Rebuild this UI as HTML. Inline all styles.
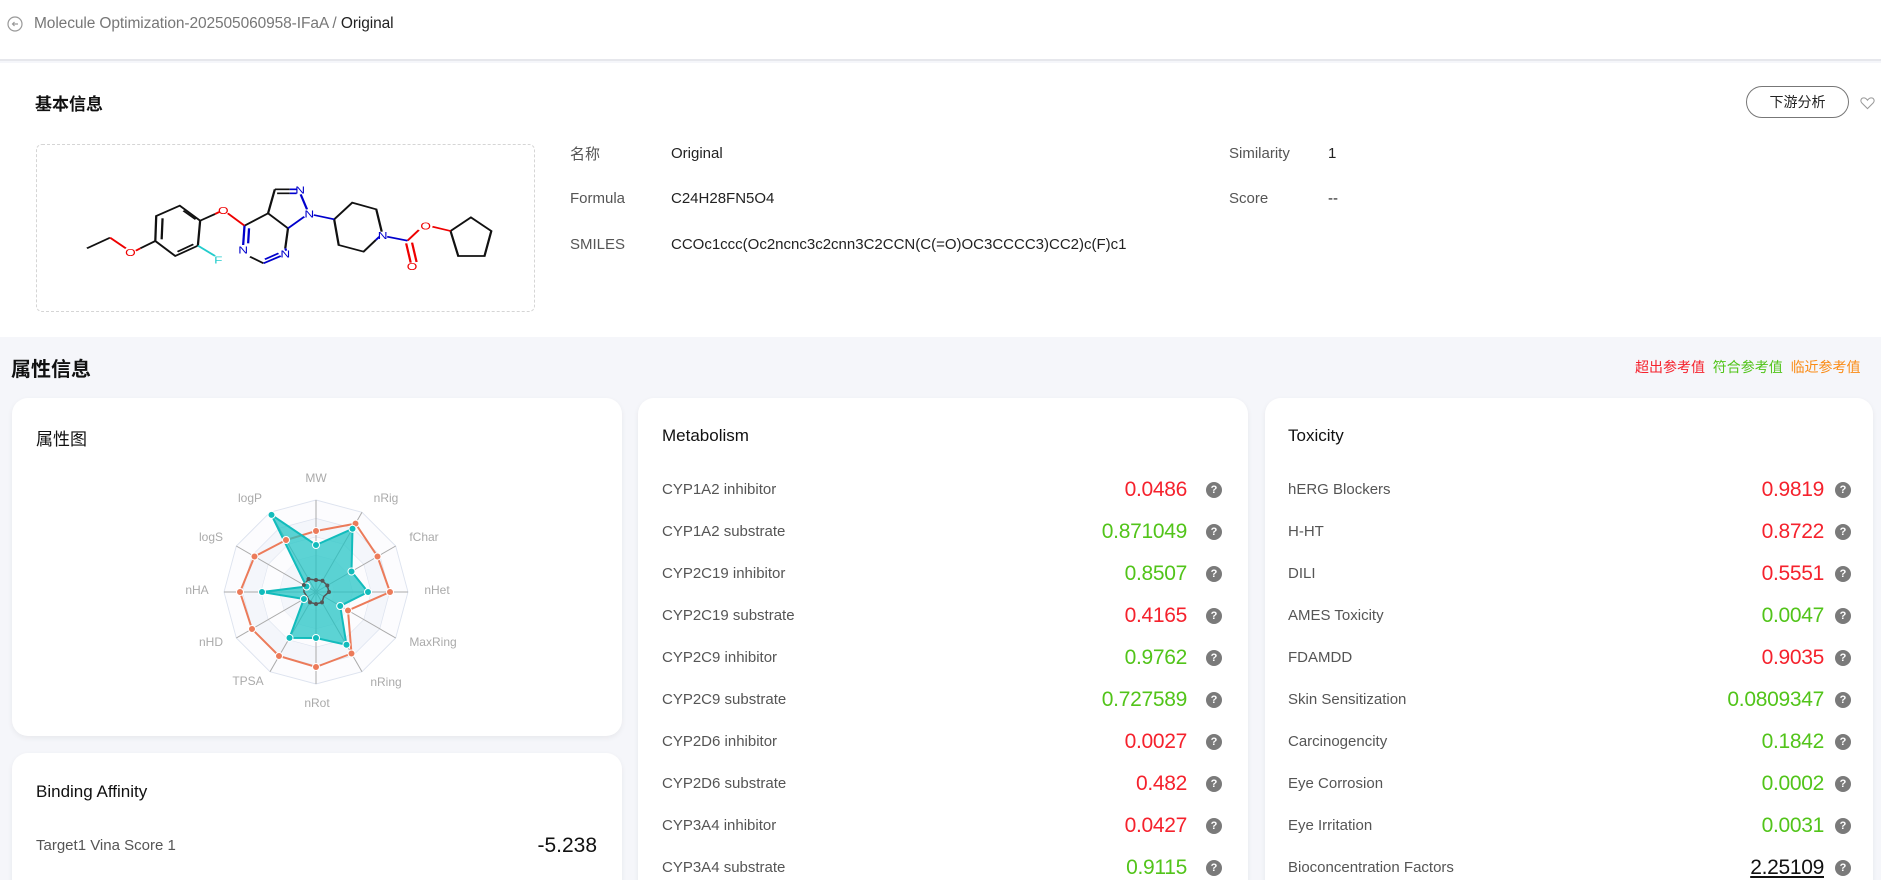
<!DOCTYPE html>
<html><head><meta charset="utf-8">
<style>
*{margin:0;padding:0;box-sizing:border-box}
html{width:1881px;height:880px;overflow:hidden}
body{width:1881px;height:880px;overflow:hidden;background:#f5f6fa;font-family:"Liberation Sans","Noto Sans CJK SC",sans-serif;position:relative;color:#222}
.abs{position:absolute;white-space:nowrap}
.top{position:absolute;left:0;top:0;width:1881px;height:61px;background:#fff;border-bottom:2px solid #e6e7ec}
.basic{position:absolute;left:0;top:63px;width:1881px;height:274px;background:#fff}
.card{position:absolute;background:#fff;border-radius:16px;box-shadow:0 2px 6px rgba(0,0,0,.06)}
.ct{position:absolute;left:36px;top:28px;font-size:17px;color:#111}
.row{position:absolute;left:0;right:0;height:24px}
.lab{position:absolute;left:24px;top:3px;font-size:15px;color:#555}
.val{position:absolute;right:61px;top:0;font-size:21px;line-height:24px;letter-spacing:-0.3px}
.q{position:absolute;right:26px;top:4px;width:16px;height:16px;border-radius:50%;background:#7a7a7a;color:#fff;font-size:11px;font-weight:bold;text-align:center;line-height:16px}
.r{color:#f5222d}.g{color:#52c41a}
.il{font-size:15px;color:#555}
.iv{font-size:15px;color:#222}
</style></head><body>
<div class="top">
 <svg class="abs" style="left:7px;top:16px" width="16" height="16" viewBox="0 0 16 16"><circle cx="8" cy="8" r="7" fill="none" stroke="#999" stroke-width="1.2"/><path d="M11 8H5.5M7.5 6L5.5 8l2 2" fill="none" stroke="#999" stroke-width="1.2"/></svg>
 <div class="abs" style="left:34px;top:15px;font-size:15.5px;color:#777;letter-spacing:-0.1px">Molecule Optimization-202505060958-IFaA / <span style="color:#222">Original</span></div>
</div>
<div class="basic">
 <div class="abs" style="left:35px;top:27px;font-size:17px;font-weight:bold;color:#111">基本信息</div>
 <div class="abs" style="left:1746px;top:23px;width:103px;height:32px;border:1px solid #777;border-radius:16px;font-size:14px;text-align:center;line-height:30px;color:#222">下游分析</div>
 <svg class="abs" style="left:1860px;top:33px" width="15" height="14" viewBox="0 0 16 14"><path d="M8 13L2 7C0 5 1 1.5 4 1.5 6 1.5 7.3 3 8 4 8.7 3 10 1.5 12 1.5 15 1.5 16 5 14 7Z" fill="none" stroke="#999" stroke-width="1.1"/></svg>
 <div class="abs" style="left:36px;top:81px;width:499px;height:168px;border:1px dashed #d5d5d5;border-radius:6px"></div>
 <div class="abs il" style="left:570px;top:80px">名称</div><div class="abs iv" style="left:671px;top:82px">Original</div>
 <div class="abs il" style="left:570px;top:127px">Formula</div><div class="abs iv" style="left:671px;top:127px">C24H28FN5O4</div>
 <div class="abs il" style="left:570px;top:173px">SMILES</div><div class="abs iv" style="left:671px;top:173px">CCOc1ccc(Oc2ncnc3c2cnn3C2CCN(C(=O)OC3CCCC3)CC2)c(F)c1</div>
 <div class="abs il" style="left:1229px;top:82px">Similarity</div><div class="abs iv" style="left:1328px;top:82px">1</div>
 <div class="abs il" style="left:1229px;top:127px">Score</div><div class="abs iv" style="left:1328px;top:127px">--</div>
</div>
<svg class="abs" style="left:0;top:0" width="710" height="340" viewBox="0 0 1568 1020" preserveAspectRatio="none">
 <g fill="none" stroke="#111" stroke-width="5">
  <polyline points="192,745 243,713"/>
  <polygon points="343,723 345,648 397,617 442,662 437,737 387,768"/>
  <line x1="357" y1="718" x2="359" y2="655"/><line x1="405" y1="632" x2="432" y2="658"/><line x1="392" y1="755" x2="427" y2="733"/>
  <polyline points="540,677 592,640 636,685"/>
  <line x1="636" y1="685" x2="630" y2="745"/>
  <line x1="592" y1="640" x2="607" y2="568"/>
  <line x1="607" y1="568" x2="640" y2="568"/>
  <line x1="612" y1="580" x2="640" y2="580"/>
  <line x1="582" y1="790" x2="552" y2="770"/>
  <polyline points="738,658 778,608 831,628 843,695"/>
  <polyline points="738,658 748,735 803,755 830,720"/>
  <polyline points="995,693 1040,652 1085,693 1070,768 1012,768 995,693"/>
  <line x1="343" y1="723" x2="310" y2="745"/>
  <line x1="442" y1="662" x2="475" y2="642"/>
 </g>
 <g fill="none" stroke="#e00" stroke-width="5">
  <line x1="243" y1="713" x2="278" y2="745"/><line x1="300" y1="752" x2="310" y2="745"/>
  <line x1="475" y1="642" x2="484" y2="636"/><line x1="503" y1="640" x2="540" y2="677"/>
  <line x1="900" y1="722" x2="925" y2="690"/><line x1="955" y1="680" x2="995" y2="693"/>
  <line x1="897" y1="730" x2="907" y2="788"/><line x1="910" y1="728" x2="920" y2="786"/>
 </g>
 <g fill="none" stroke="#00c" stroke-width="5">
  <line x1="540" y1="677" x2="537" y2="735"/><line x1="550" y1="685" x2="548" y2="730"/>
  <line x1="582" y1="790" x2="620" y2="768"/><line x1="585" y1="778" x2="615" y2="760"/>
  <line x1="630" y1="745" x2="632" y2="752"/>
  <line x1="640" y1="568" x2="655" y2="568"/><line x1="640" y1="580" x2="655" y2="580"/>
  <line x1="664" y1="583" x2="678" y2="628"/>
  <line x1="636" y1="685" x2="672" y2="650"/><line x1="693" y1="645" x2="738" y2="658"/>
  <line x1="830" y1="720" x2="838" y2="710"/><line x1="855" y1="710" x2="900" y2="722"/>
 </g>
 <line x1="437" y1="737" x2="475" y2="768" stroke="#2cc" stroke-width="5"/>
 <g font-family="Liberation Sans" font-size="30" text-anchor="middle">
  <text x="288" y="768" fill="#e00">O</text><text x="493" y="642" fill="#e00">O</text>
  <text x="482" y="790" fill="#2cc">F</text>
  <text x="537" y="760" fill="#00c">N</text><text x="630" y="772" fill="#00c">N</text>
  <text x="663" y="580" fill="#00c">N</text><text x="683" y="652" fill="#00c">N</text>
  <text x="845" y="717" fill="#00c">N</text>
  <text x="940" y="688" fill="#e00">O</text><text x="910" y="810" fill="#e00">O</text>
 </g>
</svg>

<div class="abs" style="left:11px;top:353px;font-size:20px;font-weight:bold;color:#111">属性信息</div>
<div class="abs" style="left:1635px;top:357px;font-size:14px"><span style="color:#f5222d">超出参考值</span>&nbsp;&nbsp;<span style="color:#52c41a">符合参考值</span>&nbsp;&nbsp;<span style="color:#fa8c16">临近参考值</span></div>

<div class="card" style="left:12px;top:398px;width:610px;height:338px">
 <div class="ct" style="left:24px;top:27px">属性图</div>
</div>
<svg class="abs" style="left:0;top:0" width="700" height="880">
 <g transform="translate(316,592)">
  <g stroke="#dde3ef" stroke-width="1" vector-effect="non-scaling-stroke">
  <polygon transform="scale(0.92)" fill="#fcfcfe" points="0,-100 50,-86.6 86.6,-50 100,0 86.6,50 50,86.6 0,100 -50,86.6 -86.6,50 -100,0 -86.6,-50 -50,-86.6"/>
  <polygon transform="scale(0.736)" fill="#f4f6fb" points="0,-100 50,-86.6 86.6,-50 100,0 86.6,50 50,86.6 0,100 -50,86.6 -86.6,50 -100,0 -86.6,-50 -50,-86.6"/>
  <polygon transform="scale(0.552)" fill="#fcfcfe" points="0,-100 50,-86.6 86.6,-50 100,0 86.6,50 50,86.6 0,100 -50,86.6 -86.6,50 -100,0 -86.6,-50 -50,-86.6"/>
  <polygon transform="scale(0.368)" fill="#f4f6fb" points="0,-100 50,-86.6 86.6,-50 100,0 86.6,50 50,86.6 0,100 -50,86.6 -86.6,50 -100,0 -86.6,-50 -50,-86.6"/>
  <polygon transform="scale(0.184)" fill="#fcfcfe" points="0,-100 50,-86.6 86.6,-50 100,0 86.6,50 50,86.6 0,100 -50,86.6 -86.6,50 -100,0 -86.6,-50 -50,-86.6"/>
  </g>
  <g stroke="#aaa" stroke-width="1">
   <line x1="0" y1="0" x2="0" y2="-92"/><line x1="0" y1="0" x2="46" y2="-79.7"/><line x1="0" y1="0" x2="79.7" y2="-46"/><line x1="0" y1="0" x2="92" y2="0"/><line x1="0" y1="0" x2="79.7" y2="46"/><line x1="0" y1="0" x2="46" y2="79.7"/><line x1="0" y1="0" x2="0" y2="92"/><line x1="0" y1="0" x2="-46" y2="79.7"/><line x1="0" y1="0" x2="-79.7" y2="46"/><line x1="0" y1="0" x2="-92" y2="0"/><line x1="0" y1="0" x2="-79.7" y2="-46"/><line x1="0" y1="0" x2="-46" y2="-79.7"/>
  </g>
  <polygon fill="none" stroke="#ec7b5a" stroke-width="2" points="0,-61 39.5,-68.4 61.5,-35.5 74,0 32,18.5 35.5,61.5 0,75 -37,64 -64,37 -76,0 -61.5,-35.5 -30,-52"/>
  <polygon fill="rgba(30,196,196,0.72)" stroke="#12bcbc" stroke-width="2" points="0,-47 36.5,-63.2 35.5,-20.5 52,0 24.2,14 30.5,52.8 0,46 -26.5,45.9 -12.1,7 -54,0 -9.5,-5.5 -44.5,-77.1"/>
  <polygon fill="none" stroke="#555" stroke-width="1.5" points="0,-12 6.5,-11.3 11.3,-6.5 13,0 7.8,4.5 6,10.4 0,12 -6,10.4 -8.7,5 -12,0 -12.1,-7 -7.5,-13"/>
  <g fill="#ec7b5a" stroke="#fff" stroke-width="1"><circle cx="0" cy="-61" r="3.5"/><circle cx="39.5" cy="-68.4" r="3.5"/><circle cx="61.5" cy="-35.5" r="3.5"/><circle cx="74" cy="0" r="3.5"/><circle cx="32" cy="18.5" r="3.5"/><circle cx="35.5" cy="61.5" r="3.5"/><circle cx="0" cy="75" r="3.5"/><circle cx="-37" cy="64" r="3.5"/><circle cx="-64" cy="37" r="3.5"/><circle cx="-76" cy="0" r="3.5"/><circle cx="-61.5" cy="-35.5" r="3.5"/><circle cx="-30" cy="-52" r="3.5"/></g>
  <g fill="#12bcbc" stroke="#fff" stroke-width="1"><circle cx="0" cy="-47" r="3.5"/><circle cx="36.5" cy="-63.2" r="3.5"/><circle cx="35.5" cy="-20.5" r="3.5"/><circle cx="52" cy="0" r="3.5"/><circle cx="24.2" cy="14" r="3.5"/><circle cx="30.5" cy="52.8" r="3.5"/><circle cx="0" cy="46" r="3.5"/><circle cx="-26.5" cy="45.9" r="3.5"/><circle cx="-12.1" cy="7" r="3.5"/><circle cx="-54" cy="0" r="3.5"/><circle cx="-9.5" cy="-5.5" r="3.5"/><circle cx="-44.5" cy="-77.1" r="3.5"/></g>
  <g fill="#555"><circle cx="0" cy="-12" r="2"/><circle cx="6.5" cy="-11.3" r="2"/><circle cx="11.3" cy="-6.5" r="2"/><circle cx="13" cy="0" r="2"/><circle cx="6" cy="10.4" r="2"/><circle cx="0" cy="12" r="2"/><circle cx="-6" cy="10.4" r="2"/><circle cx="-12.1" cy="-7" r="2"/><circle cx="-7.5" cy="-13" r="2"/></g>
  <g font-family="Liberation Sans" font-size="12" fill="#aaa" text-anchor="middle" dominant-baseline="central">
   <text x="0" y="-114">MW</text><text x="70" y="-94">nRig</text><text x="108" y="-55">fChar</text><text x="121" y="-2">nHet</text><text x="117" y="50">MaxRing</text><text x="70" y="90">nRing</text><text x="1" y="111">nRot</text><text x="-68" y="89">TPSA</text><text x="-105" y="50">nHD</text><text x="-119" y="-2">nHA</text><text x="-105" y="-55">logS</text><text x="-66" y="-94">logP</text>
  </g>
 </g>
</svg>

<div class="card" style="left:12px;top:753px;width:610px;height:150px">
 <div class="ct" style="left:24px;top:29px">Binding Affinity</div>
 <div class="abs" style="left:24px;top:84px;font-size:15px;color:#555">Target1 Vina Score 1</div>
 <div class="abs" style="right:25px;top:81px;font-size:21px;color:#111">-5.238</div>
</div>

<div class="card" style="left:638px;top:398px;width:610px;height:500px">
 <div class="ct" style="left:24px;top:28px">Metabolism</div>
 <div class="row" style="top:80px"><div class="lab">CYP1A2 inhibitor</div><div class="val r">0.0486</div><div class="q">?</div></div>
 <div class="row" style="top:122px"><div class="lab">CYP1A2 substrate</div><div class="val g">0.871049</div><div class="q">?</div></div>
 <div class="row" style="top:164px"><div class="lab">CYP2C19 inhibitor</div><div class="val g">0.8507</div><div class="q">?</div></div>
 <div class="row" style="top:206px"><div class="lab">CYP2C19 substrate</div><div class="val r">0.4165</div><div class="q">?</div></div>
 <div class="row" style="top:248px"><div class="lab">CYP2C9 inhibitor</div><div class="val g">0.9762</div><div class="q">?</div></div>
 <div class="row" style="top:290px"><div class="lab">CYP2C9 substrate</div><div class="val g">0.727589</div><div class="q">?</div></div>
 <div class="row" style="top:332px"><div class="lab">CYP2D6 inhibitor</div><div class="val r">0.0027</div><div class="q">?</div></div>
 <div class="row" style="top:374px"><div class="lab">CYP2D6 substrate</div><div class="val r">0.482</div><div class="q">?</div></div>
 <div class="row" style="top:416px"><div class="lab">CYP3A4 inhibitor</div><div class="val r">0.0427</div><div class="q">?</div></div>
 <div class="row" style="top:458px"><div class="lab">CYP3A4 substrate</div><div class="val g">0.9115</div><div class="q">?</div></div>
</div>

<div class="card" style="left:1265px;top:398px;width:608px;height:500px">
 <div class="ct" style="left:23px;top:28px">Toxicity</div>
 <div class="row" style="top:80px"><div class="lab" style="left:23px">hERG Blockers</div><div class="val r" style="right:49px">0.9819</div><div class="q" style="right:22px">?</div></div>
 <div class="row" style="top:122px"><div class="lab" style="left:23px">H-HT</div><div class="val r" style="right:49px">0.8722</div><div class="q" style="right:22px">?</div></div>
 <div class="row" style="top:164px"><div class="lab" style="left:23px">DILI</div><div class="val r" style="right:49px">0.5551</div><div class="q" style="right:22px">?</div></div>
 <div class="row" style="top:206px"><div class="lab" style="left:23px">AMES Toxicity</div><div class="val g" style="right:49px">0.0047</div><div class="q" style="right:22px">?</div></div>
 <div class="row" style="top:248px"><div class="lab" style="left:23px">FDAMDD</div><div class="val r" style="right:49px">0.9035</div><div class="q" style="right:22px">?</div></div>
 <div class="row" style="top:290px"><div class="lab" style="left:23px">Skin Sensitization</div><div class="val g" style="right:49px">0.0809347</div><div class="q" style="right:22px">?</div></div>
 <div class="row" style="top:332px"><div class="lab" style="left:23px">Carcinogencity</div><div class="val g" style="right:49px">0.1842</div><div class="q" style="right:22px">?</div></div>
 <div class="row" style="top:374px"><div class="lab" style="left:23px">Eye Corrosion</div><div class="val g" style="right:49px">0.0002</div><div class="q" style="right:22px">?</div></div>
 <div class="row" style="top:416px"><div class="lab" style="left:23px">Eye Irritation</div><div class="val g" style="right:49px">0.0031</div><div class="q" style="right:22px">?</div></div>
 <div class="row" style="top:458px"><div class="lab" style="left:23px">Bioconcentration Factors</div><div class="val" style="right:49px;color:#111;text-decoration:underline">2.25109</div><div class="q" style="right:22px">?</div></div>
</div>
</body></html>
